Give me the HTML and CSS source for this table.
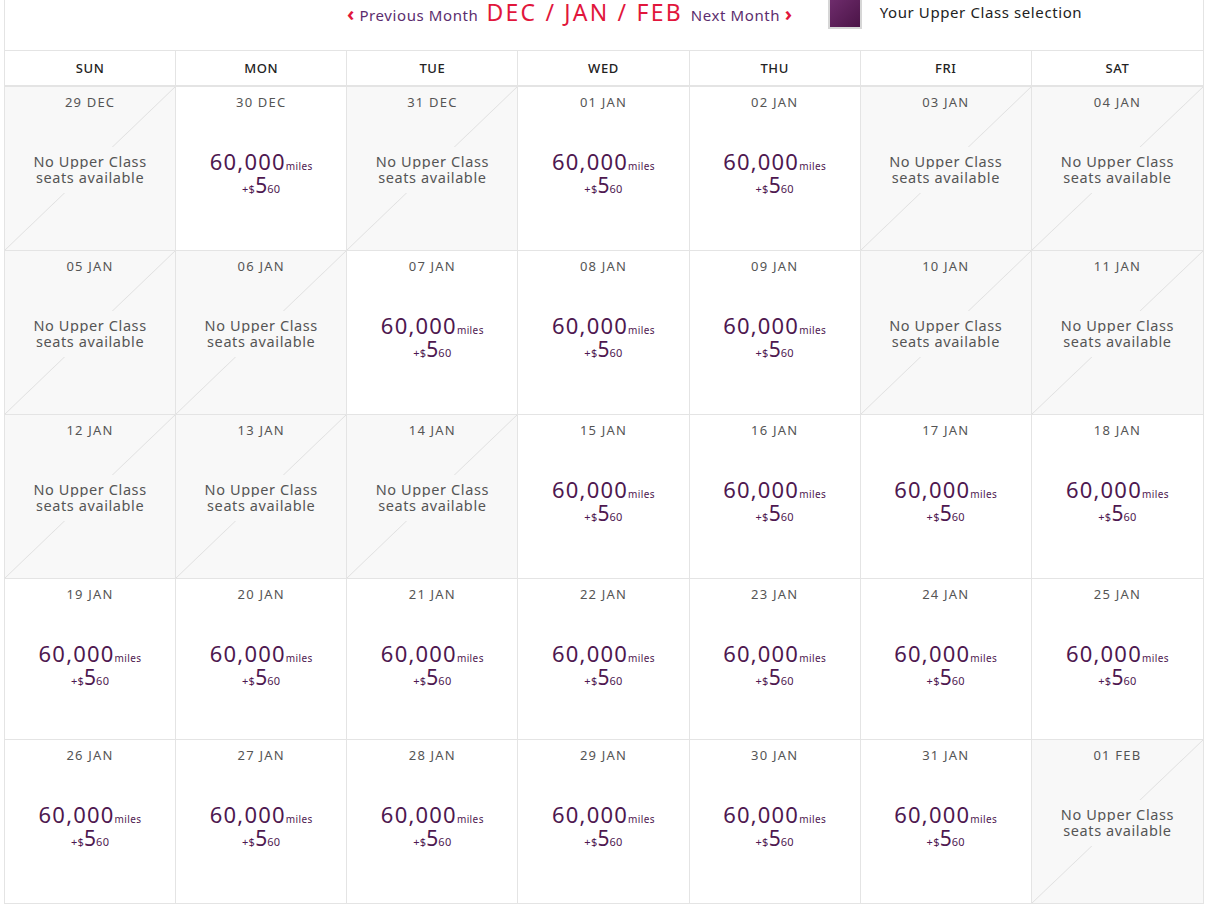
FILE: index.html
```html
<!DOCTYPE html>
<html>
<head>
<meta charset="utf-8">
<link rel="stylesheet" href="styles.css">
</head>
<body>
<div class="cal">
  <div class="top">
    <div class="nav">
      <a class="navlink"><span class="chev">&#8249;</span> Previous Month</a>
      <span class="months">DEC / JAN / FEB</span>
      <a class="navlink">Next Month <span class="chev">&#8250;</span></a>
    </div>
    <div class="legend">
      <span class="swatch"></span>
      <span class="legend-text">Your Upper Class selection</span>
    </div>
  </div>
  <div class="grid" id="grid">
    <div class="dow">SUN</div><div class="dow">MON</div><div class="dow">TUE</div><div class="dow">WED</div><div class="dow">THU</div><div class="dow">FRI</div><div class="dow">SAT</div>
  </div>
</div>
<script src="app.js"></script>
</body>
</html>
```
FILE: app.js
```js
var days = [
  ["29 DEC",0],["30 DEC",1],["31 DEC",0],["01 JAN",1],["02 JAN",1],["03 JAN",0],["04 JAN",0],
  ["05 JAN",0],["06 JAN",0],["07 JAN",1],["08 JAN",1],["09 JAN",1],["10 JAN",0],["11 JAN",0],
  ["12 JAN",0],["13 JAN",0],["14 JAN",0],["15 JAN",1],["16 JAN",1],["17 JAN",1],["18 JAN",1],
  ["19 JAN",1],["20 JAN",1],["21 JAN",1],["22 JAN",1],["23 JAN",1],["24 JAN",1],["25 JAN",1],
  ["26 JAN",1],["27 JAN",1],["28 JAN",1],["29 JAN",1],["30 JAN",1],["31 JAN",1],["01 FEB",0]
];
var grid = document.getElementById("grid");
days.forEach(function (d, i) {
  var c = document.createElement("div");
  c.className = "cell" + (d[1] ? "" : " na");
  var html = '<div class="date">' + d[0] + '</div>';
  if (d[1]) {
    html += '<div class="price"><div class="miles"><span class="num">60,000</span><span class="unit">miles</span></div>' +
      '<div class="tax"><span class="sm">+$</span><span class="big">5</span><span class="sm">60</span></div></div>';
  } else {
    html += '<div class="none"><span class="line">No Upper Class</span><span class="line">seats available</span></div>';
  }
  c.innerHTML = html;
  grid.appendChild(c);
});
```
FILE: styles.css
```css
html, body { margin: 0; padding: 0; background: #fff; }
body { font-family: "Noto Sans", "Liberation Sans", sans-serif; color: #222; }
.cal {
  margin-left: 4px;
  width: 1200px;
  border-left: 1px solid #e4e4e4;
  border-right: 1px solid #e4e4e4;
  box-sizing: border-box;
}
.top {
  height: 51px;
  box-sizing: border-box;
  border-bottom: 1px solid #e4e4e4;
  display: flex;
  align-items: flex-start;
  padding-left: 342px;
}
.nav { display: flex; align-items: baseline; gap: 8px; height: 30px; }
.navlink { color: #5b2d6e; font-size: 15px; line-height: 24px; letter-spacing: 0.6px; }
.chev { color: #e1163c; font-weight: 700; font-size: 20px; }
.months { color: #e1163c; font-size: 23px; line-height: 24px; letter-spacing: 2.2px; }
.legend { display: flex; align-items: flex-start; margin-left: 35px; }
.swatch {
  width: 30px; height: 27px;
  border: 2px solid #d6d6d6; border-top: 0;
  background: linear-gradient(135deg, #6e2c6c, #4b1447);
}
.legend-text { margin-left: 18px; font-size: 15px; line-height: 25px; color: #222; letter-spacing: 0.6px; }
.grid {
  display: grid;
  grid-template-columns: repeat(7, 1fr);
  grid-template-rows: 36px 164px 164px 164px 161px 164px;
}
.dow {
  box-sizing: border-box;
  border-bottom: 2px solid #e4e4e4;
  border-right: 1px solid #e4e4e4;
  text-align: center;
  font-size: 13px;
  font-weight: 500;
  letter-spacing: 0.6px;
  line-height: 34px;
  color: #222;
}
.dow:nth-child(7n) { border-right: 0; }
.cell {
  box-sizing: border-box;
  border-bottom: 1px solid #e4e4e4;
  border-right: 1px solid #e4e4e4;
  text-align: center;
  padding-top: 7px;
}
.cell:nth-child(7n) { border-right: 0; }
.cell.na {
  background: #f8f8f8 linear-gradient(to bottom right, transparent calc(50% - 0.8px), #e2e2e2 50%, transparent calc(50% + 0.8px));
}
.date { font-size: 13px; line-height: 16px; color: #555; letter-spacing: 1.2px; }
.none {
  margin-top: 37px;
  display: flex;
  flex-direction: column;
  align-items: center;
}
.none .line {
  display: block;
  background: #f8f8f8;
  font-size: 14.5px;
  line-height: 16px;
  color: #555;
  letter-spacing: 0.6px;
  padding: 0 4px;
}
.none .line:first-child { padding-top: 6px; }
.none .line:last-child { padding-bottom: 8px; }
.price { margin-top: 38px; color: #4e1850; }
.miles { line-height: 26px; }
.num { font-size: 22px; letter-spacing: 1.2px; }
.unit { font-size: 10px; margin-left: 0; letter-spacing: 0.4px; }
.tax { line-height: 20px; margin-top: -4px; }
.sm { font-size: 11px; letter-spacing: 0.3px; }
.big { font-size: 21px; }
```
